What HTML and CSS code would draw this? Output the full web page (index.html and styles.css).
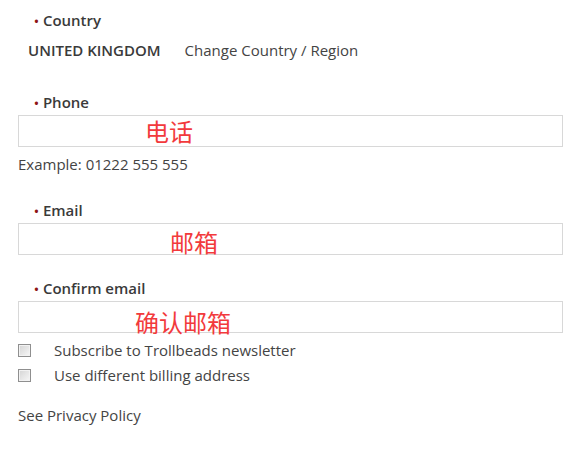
FILE: index.html
```html
<!DOCTYPE html>
<html lang="en">
<head>
    <meta charset="UTF-8">
    <meta name="viewport" content="width=device-width, initial-scale=1.0">
    <title>Checkout Details</title>
    <link rel="stylesheet" href="styles.css">
</head>
<body>
    <form class="details-form">
        <label class="field-label label-country"><span class="req">&bull;</span>Country</label>
        <div class="country-row">
            <span class="country-name">UNITED KINGDOM</span>
            <a class="country-change" href="#">Change Country / Region</a>
        </div>

        <label class="field-label label-phone" for="phone"><span class="req">&bull;</span>Phone</label>
        <div class="input-wrap">
            <input type="text" id="phone" class="text-input">
            <span class="note note-phone">电话</span>
        </div>
        <p class="hint">Example: 01222 555 555</p>

        <label class="field-label label-email" for="email"><span class="req">&bull;</span>Email</label>
        <div class="input-wrap">
            <input type="text" id="email" class="text-input">
            <span class="note note-email">邮箱</span>
        </div>

        <label class="field-label label-confirm" for="confirm"><span class="req">&bull;</span>Confirm email</label>
        <div class="input-wrap">
            <input type="text" id="confirm" class="text-input">
            <span class="note note-confirm">确认邮箱</span>
        </div>

        <label class="check-row check-first">
            <input type="checkbox" class="check-box">
            <span>Subscribe to Trollbeads newsletter</span>
        </label>
        <label class="check-row">
            <input type="checkbox" class="check-box">
            <span>Use different billing address</span>
        </label>

        <a class="privacy" href="#">See Privacy Policy</a>
    </form>
</body>
</html>
```

FILE: styles.css
```css
body {
    margin: 0;
    font-family: "Open Sans", Arial, sans-serif;
    font-size: 15px;
    line-height: 20px;
    color: #444;
    background: #fff;
}

.details-form {
    display: flex;
    flex-direction: column;
    width: 545px;
    padding: 10px 0 0 18px;
}

.field-label {
    display: block;
    height: 20px;
    padding-left: 16px;
    font-weight: 600;
    color: #3a3a3a;
    margin-bottom: 3px;
}

.req {
    color: #8e1414;
    font-size: 13px;
    line-height: 1;
    margin-right: 4px;
}

.label-phone {
    margin-top: 32px;
}

.label-email {
    margin-top: 26px;
}

.label-confirm {
    margin-top: 23px;
}

.country-row {
    display: flex;
    gap: 24px;
    padding-left: 10px;
    margin-top: 7px;
}

.country-name {
    font-weight: 600;
    color: #3a3a3a;
}

.country-change,
.privacy {
    color: #444;
    text-decoration: none;
}

.input-wrap {
    position: relative;
}

.text-input {
    display: block;
    box-sizing: border-box;
    width: 545px;
    height: 32px;
    margin: 0;
    border: 1px solid #d8d8d8;
    font-family: inherit;
    font-size: 14px;
}

.note {
    position: absolute;
    font-family: "Noto Sans CJK SC", sans-serif;
    font-size: 24px;
    line-height: 24px;
    color: #f23a3c;
}

.note-phone {
    left: 127px;
    top: 4px;
}

.note-email {
    left: 152px;
    top: 7px;
}

.note-confirm {
    left: 117px;
    top: 9px;
}

.hint {
    margin: 7px 0 0;
}

.check-row {
    display: flex;
    align-items: center;
    gap: 23px;
    margin-top: 5px;
}

.check-first {
    margin-top: 7px;
}

.check-box {
    appearance: none;
    box-sizing: border-box;
    width: 13px;
    height: 13px;
    margin: 0;
    border: 1px solid #8f8f8f;
    background: linear-gradient(135deg, #d4d4d4, #f7f7f7);
    box-shadow: inset 0 0 0 1px #f2f2f2;
}

.privacy {
    margin-top: 20px;
    align-self: flex-start;
}
```
